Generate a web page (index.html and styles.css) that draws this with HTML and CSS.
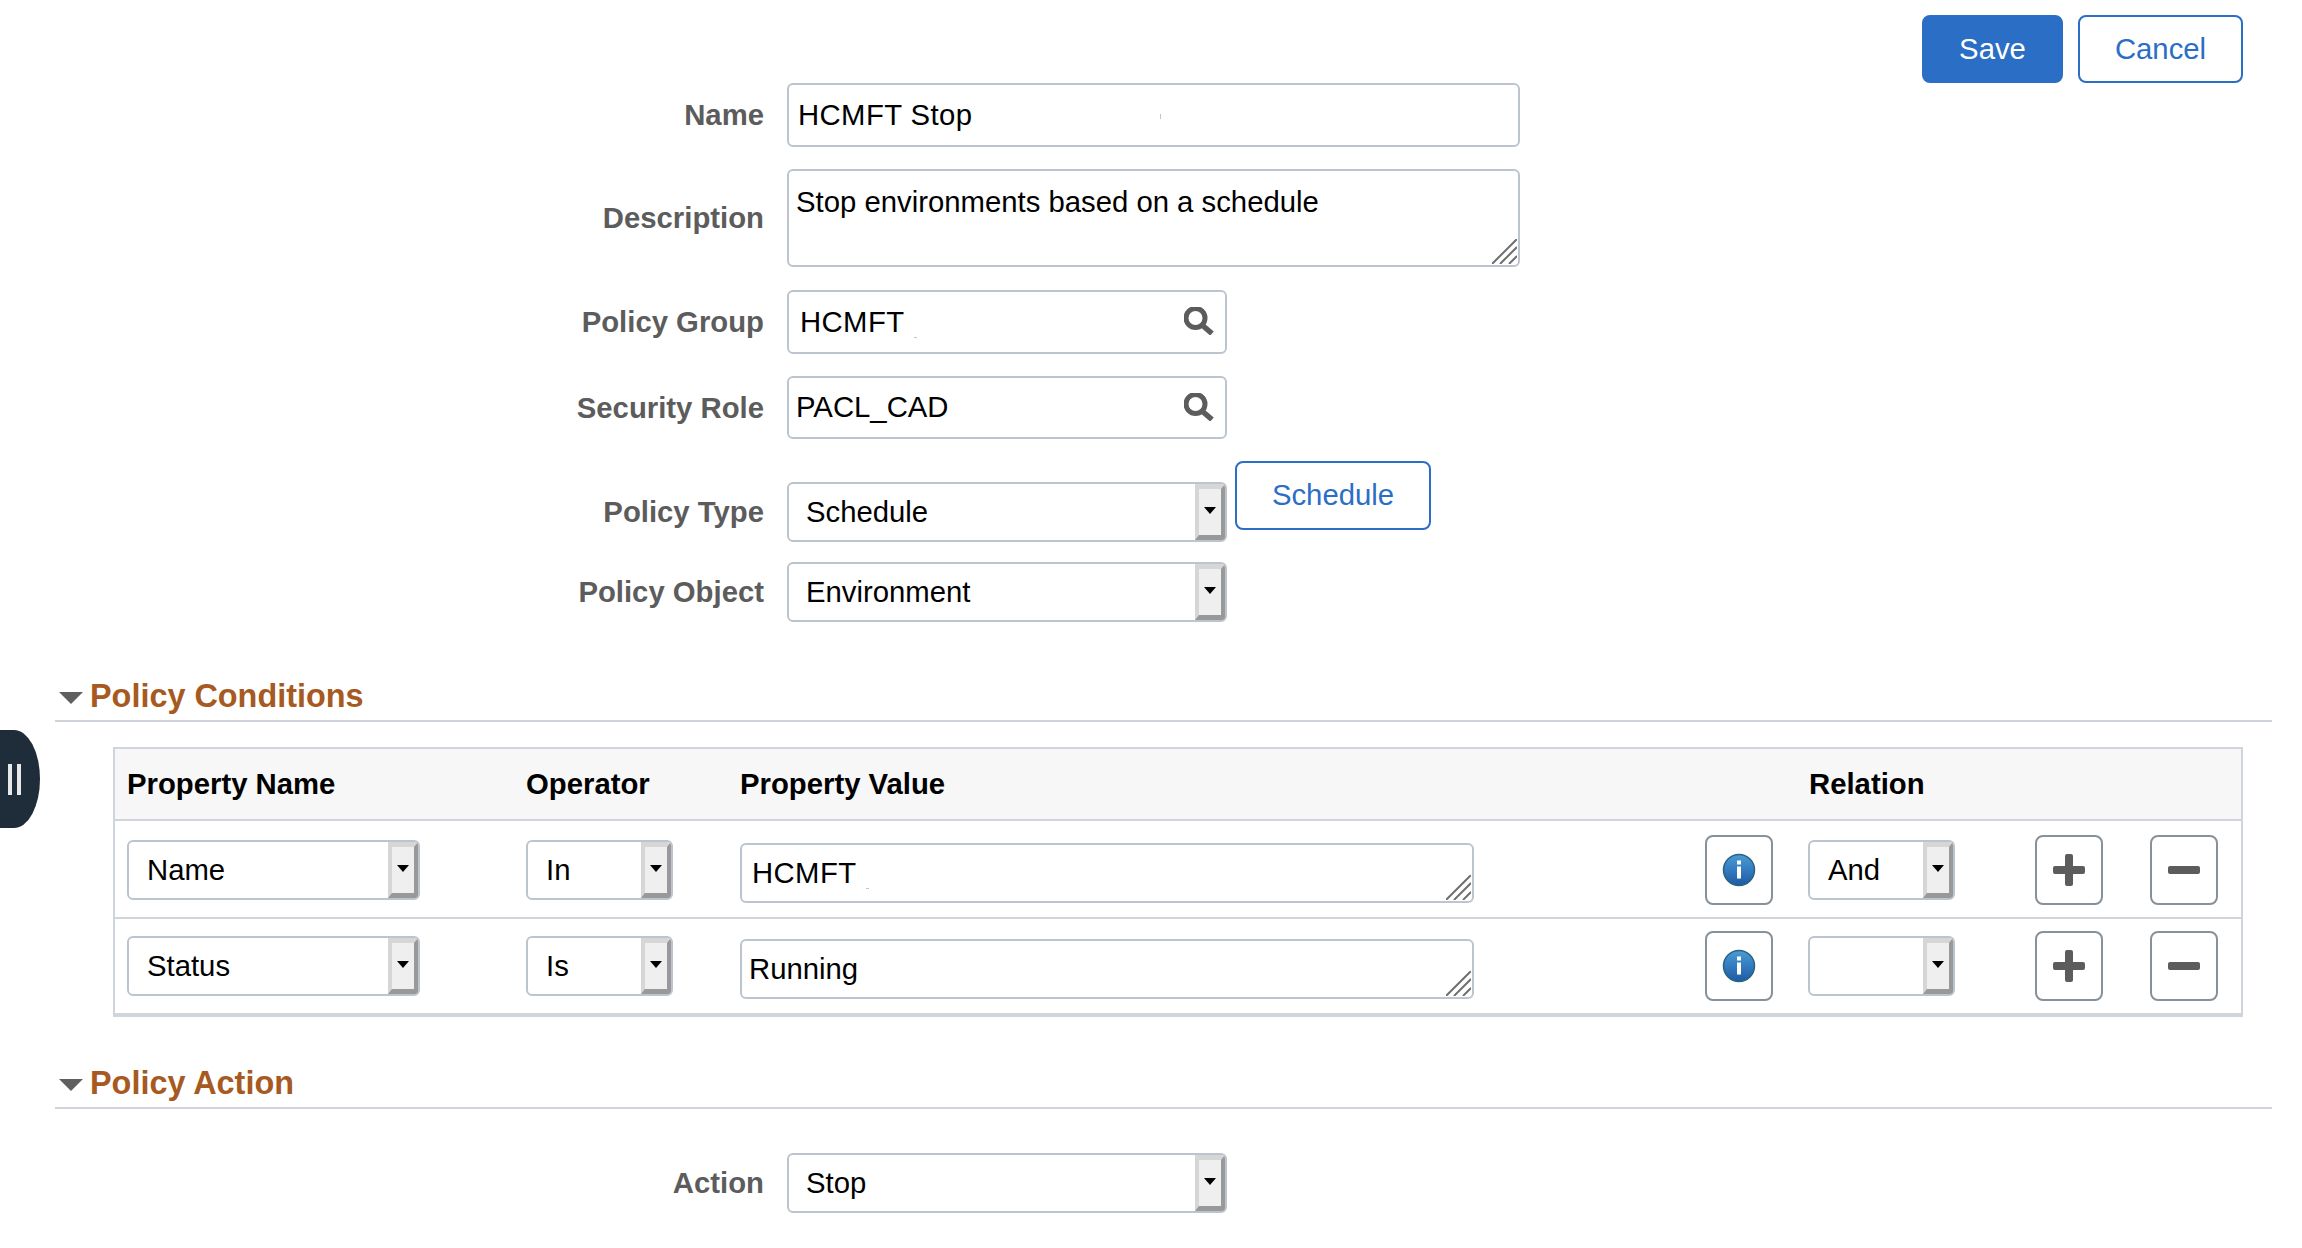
FILE: index.html
```html
<!DOCTYPE html>
<html>
<head>
	<title>Policy Details</title>
	<link rel="stylesheet" href="styles.css">
</head>
<body>
	<svg class="defs" width="0" height="0">
		<defs>
			<linearGradient id="info-fill" x1="0" y1="0" x2="0" y2="1">
				<stop offset="0" stop-color="#4a9cd6"/>
				<stop offset="1" stop-color="#1d5aa6"/>
			</linearGradient>
			<symbol id="icon-search" viewBox="0 0 30 28">
				<circle cx="11.5" cy="11" r="9.5" fill="none" stroke="#5c5c5c" stroke-width="5"/>
				<path d="M18 18 L28 26.5" fill="none" stroke="#5c5c5c" stroke-width="5.5"/>
			</symbol>
			<symbol id="icon-grip" viewBox="0 0 25 25">
				<path d="M0 25 L25 0 M8 25 L25 8 M17 25 L25 17" fill="none" stroke="#6f6f6f" stroke-width="2"/>
			</symbol>
			<symbol id="icon-info" viewBox="0 0 34 34">
				<circle cx="17" cy="17" r="15.5" fill="url(#info-fill)" stroke="#27657f" stroke-width="1.5"/>
				<rect x="15" y="7.5" width="4" height="4" fill="#fff"/>
				<rect x="15" y="13.5" width="4" height="12" fill="#fff"/>
			</symbol>
			<symbol id="icon-plus" viewBox="0 0 32 32">
				<path d="M12 2 a2 2 0 0 1 2 -2 h4 a2 2 0 0 1 2 2 v10 h10 a2 2 0 0 1 2 2 v4 a2 2 0 0 1 -2 2 h-10 v10 a2 2 0 0 1 -2 2 h-4 a2 2 0 0 1 -2 -2 v-10 h-10 a2 2 0 0 1 -2 -2 v-4 a2 2 0 0 1 2 -2 h10 z" fill="#5c5c5c"/>
			</symbol>
			<symbol id="icon-minus" viewBox="0 0 32 8">
				<rect width="32" height="8" rx="2" fill="#5c5c5c"/>
			</symbol>
		</defs>
	</svg>

	<div class="handle"><span class="handle-bar"></span><span class="handle-bar"></span></div>

	<div class="toolbar">
		<button class="btn btn-primary btn-save">Save</button>
		<button class="btn btn-cancel">Cancel</button>
	</div>

	<form class="policy-form">
		<div class="form-row">
			<div class="form-label">Name</div>
			<div class="field field-wide pad-9 spaced">HCMFT Stop<i class="speck speck-name"></i></div>
		</div>
		<div class="form-row row-description">
			<div class="form-label">Description</div>
			<div class="field field-wide field-area pad-7">Stop environments based on a schedule
				<svg class="grip"><use href="#icon-grip"/></svg>
			</div>
		</div>
		<div class="form-row row-group">
			<div class="form-label">Policy Group</div>
			<div class="field field-mid pad-11 spaced">HCMFT<i class="speck speck-group"></i>
				<svg class="search"><use href="#icon-search"/></svg>
			</div>
		</div>
		<div class="form-row row-role">
			<div class="form-label">Security Role</div>
			<div class="field field-mid field-role pad-7">PACL_CAD
				<svg class="search"><use href="#icon-search"/></svg>
			</div>
		</div>
		<div class="form-row row-type">
			<div class="form-label">Policy Type</div>
			<div class="select field-mid">Schedule<span class="select-btn"><i class="select-arrow"></i></span></div>
			<button type="button" class="btn btn-schedule">Schedule</button>
		</div>
		<div class="form-row row-object">
			<div class="form-label">Policy Object</div>
			<div class="select field-mid">Environment<span class="select-btn"><i class="select-arrow"></i></span></div>
		</div>
	</form>

	<h2 class="section-head section-conditions"><i class="section-arrow"></i>Policy Conditions</h2>

	<div class="grid">
		<div class="grid-row grid-head">
			<div>Property Name</div>
			<div>Operator</div>
			<div>Property Value</div>
			<div></div>
			<div class="relation-head">Relation</div>
			<div></div>
			<div></div>
		</div>
		<div class="grid-row grid-line">
			<div class="select select-name">Name<span class="select-btn"><i class="select-arrow"></i></span></div>
			<div class="select select-op">In<span class="select-btn"><i class="select-arrow"></i></span></div>
			<div class="field field-value pad-10 spaced">HCMFT<i class="speck speck-value"></i><svg class="grip"><use href="#icon-grip"/></svg></div>
			<div class="icon-btn"><svg class="info"><use href="#icon-info"/></svg></div>
			<div class="select select-rel">And<span class="select-btn"><i class="select-arrow"></i></span></div>
			<div class="icon-btn"><svg class="plus"><use href="#icon-plus"/></svg></div>
			<div class="icon-btn"><svg class="minus"><use href="#icon-minus"/></svg></div>
		</div>
		<div class="grid-row grid-line grid-last">
			<div class="select select-name">Status<span class="select-btn"><i class="select-arrow"></i></span></div>
			<div class="select select-op">Is<span class="select-btn"><i class="select-arrow"></i></span></div>
			<div class="field field-value pad-7">Running<svg class="grip"><use href="#icon-grip"/></svg></div>
			<div class="icon-btn"><svg class="info"><use href="#icon-info"/></svg></div>
			<div class="select select-rel"><span class="select-btn"><i class="select-arrow"></i></span></div>
			<div class="icon-btn"><svg class="plus"><use href="#icon-plus"/></svg></div>
			<div class="icon-btn"><svg class="minus"><use href="#icon-minus"/></svg></div>
		</div>
	</div>

	<h2 class="section-head section-action"><i class="section-arrow"></i>Policy Action</h2>

	<div class="form-row row-action">
		<div class="form-label">Action</div>
		<div class="select field-mid">Stop<span class="select-btn"><i class="select-arrow"></i></span></div>
	</div>
</body>
</html>
```

FILE: styles.css
```css
/* PeopleSoft style policy page */
html, body {
	margin: 0;
	padding: 0;
	background: #fff;
	overflow: hidden;
}

body {
	font-family: "Liberation Sans", Arial, sans-serif;
	font-size: 29.3px;
	color: #000;
}

.defs {
	position: absolute;
}

/* side handle */
.handle {
	position: absolute;
	left: 0;
	top: 730px;
	width: 40px;
	height: 98px;
	display: flex;
	justify-content: flex-start;
	align-items: center;
	gap: 5px;
	padding-left: 8px;
	box-sizing: border-box;
	background: #1f2d3b;
	border-radius: 0 26px 26px 0 / 0 49px 49px 0;
}

.handle-bar {
	width: 4px;
	height: 31px;
	background: #e8e8e8;
}

/* buttons */
.toolbar {
	display: flex;
	justify-content: flex-end;
	gap: 15px;
	padding: 15px 59px 0 0;
}

.btn {
	height: 68px;
	padding: 0;
	font-family: inherit;
	font-size: 29.3px;
	border: 2px solid #2a6ec6;
	border-radius: 8px;
	background: #fff;
	color: #2a6ec6;
	box-sizing: border-box;
}

.btn-primary {
	background: #2a6ec6;
	color: #fff;
}

.btn-save {
	width: 141px;
}

.btn-cancel {
	width: 165px;
}

.btn-schedule {
	width: 196px;
	height: 69px;
	padding-bottom: 2px;
	margin: -21px 0 0 8px;
	align-self: flex-start;
}

/* form */
.form-row {
	display: flex;
	align-items: center;
}

.form-label {
	width: 764px;
	margin-right: 23px;
	text-align: right;
	font-weight: bold;
	color: #5c5c5c;
}

.row-description { margin-top: 22px; }
.row-group { margin-top: 23px; }
.row-role { margin-top: 22px; }
.row-type { margin-top: 43px; }
.row-object { margin-top: 20px; }
.row-action { margin-top: 44px; }

.field, .select {
	position: relative;
	display: flex;
	align-items: center;
	box-sizing: border-box;
	background: #fff;
	border: 2px solid #bcc5cf;
	border-radius: 6px;
}

.field-wide {
	width: 733px;
	height: 64px;
}

.field-area {
	height: 98px;
	align-items: flex-start;
	padding-top: 14px;
}

.field-mid {
	width: 440px;
}

.field.field-mid {
	height: 64px;
}

.field.field-role {
	height: 63px;
	padding-bottom: 2px;
}

.pad-7 { padding-left: 7px; }
.pad-9 { padding-left: 9px; }
.pad-10 { padding-left: 10px; }
.pad-11 { padding-left: 11px; }

.spaced {
	letter-spacing: 0.4px;
}

.grip {
	position: absolute;
	right: 1px;
	bottom: 1px;
	width: 25px;
	height: 25px;
}

.search {
	position: absolute;
	right: 11px;
	top: 15px;
	width: 30px;
	height: 28px;
}

/* little marks left in the field values */
.speck {
	position: absolute;
	background: #c4c4c4;
}

.speck-name {
	left: 371px;
	top: 29px;
	width: 1px;
	height: 5px;
}

.speck-group {
	left: 125px;
	top: 45px;
	width: 3px;
	height: 1px;
}

.speck-value {
	left: 124px;
	top: 43px;
	width: 3px;
	height: 1px;
}

/* dropdowns */
.select {
	height: 60px;
	padding-left: 18px;
}

.select.field-mid {
	padding-left: 17px;
}

.select-btn {
	position: absolute;
	right: 0;
	top: 0;
	bottom: 0;
	width: 30px;
	box-sizing: border-box;
	display: flex;
	justify-content: center;
	align-items: center;
	background: #efefef;
	border-style: solid;
	border-width: 5px 4px;
	border-color: #d6d6d6 #999 #999 #d6d6d6;
	border-radius: 0 4px 4px 0;
}

.select-arrow {
	width: 0;
	height: 0;
	margin-top: -3px;
	border-style: solid;
	border-width: 7px 6.5px 0;
	border-color: #000 transparent transparent;
}

/* section headings */
.section-head {
	display: flex;
	align-items: center;
	margin: 54px 30px 0 55px;
	padding-bottom: 4px;
	height: 40px;
	font-size: 32.4px;
	line-height: 40px;
	font-weight: bold;
	color: #a65a22;
	border-bottom: 2px solid #cfd4da;
	box-sizing: content-box;
}

.section-action {
	margin-top: 46px;
}

.section-arrow {
	width: 0;
	height: 0;
	margin: 4px 7px 0 4px;
	border-style: solid;
	border-width: 12px 12px 0;
	border-color: #5f5f5f transparent transparent;
}

/* conditions grid */
.grid {
	margin: 25px 59px 0 113px;
	border: solid #d0d5dc;
	border-width: 2px 2px 4px;
}

.grid-row {
	display: grid;
	grid-template-columns: 399px 214px 965px 103px 227px 115px 67px;
	align-items: center;
	padding-left: 12px;
}

.grid-head {
	height: 70px;
	font-weight: bold;
	background: #f7f7f7;
}

.relation-head {
	padding-left: 1px;
}

.grid-line {
	height: 94px;
	padding-top: 2px;
	border-top: 2px solid #d0d5dc;
}

.grid-last {
	height: 94px;
	padding-top: 0;
}

.select-name { width: 293px; }
.select-op { width: 147px; }
.select-rel { width: 147px; }

.field-value {
	width: 734px;
	height: 60px;
	margin-top: 6px;
}

.icon-btn {
	display: flex;
	justify-content: center;
	align-items: center;
	width: 68px;
	height: 70px;
	box-sizing: border-box;
	border: 2px solid #87919a;
	border-radius: 8px;
	background: #fff;
}

.info {
	width: 34px;
	height: 34px;
}

.plus {
	width: 32px;
	height: 32px;
}

.minus {
	width: 32px;
	height: 8px;
}
```
